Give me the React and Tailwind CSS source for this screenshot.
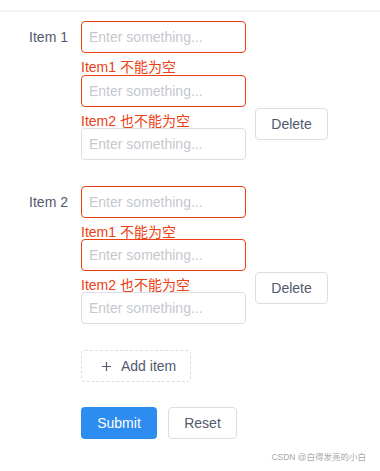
import React from "react";

const font = { fontFamily: '"Liberation Sans", Arial, "Noto Sans CJK SC", sans-serif' };

function Field({ error }) {
  return (
    <input
      readOnly
      placeholder="Enter something..."
      className={
        "block w-[165px] h-[32px] rounded-[4px] border bg-white px-[7px] text-[14px] text-[#515a6e] outline-none placeholder:text-[#c5c8ce] " +
        (error ? "border-[#ed4014]" : "border-[#dcdee2]")
      }
    />
  );
}

function Item({ label, first }) {
  return (
    <div className="flex items-start">
      <div className="w-[81px] pr-[13px] text-right text-[14px] leading-[32px] text-[#515a6e]">
        {label}
      </div>
      <div className="flex flex-col">
        <Field error />
        <div className={first ? "h-[22px]" : "h-[21px]"}>
          <div className="pt-[7px] text-[14px] leading-[14px] text-[#ed4014] whitespace-nowrap">
            Item1 不能为空
          </div>
        </div>
        <Field error />
        <div className="h-[21px]">
          <div className="pt-[7px] text-[14px] leading-[14px] text-[#ed4014] whitespace-nowrap">
            Item2 也不能为空
          </div>
        </div>
        <Field />
      </div>
      <button
        className={
          "ml-[9px] h-[32px] w-[73px] rounded-[4px] border border-[#dcdee2] bg-white text-[14px] text-[#515a6e] " +
          (first ? "mt-[87px]" : "mt-[86px]")
        }
      >
        Delete
      </button>
    </div>
  );
}

export default function App() {
  return (
    <div className="relative w-[380px] h-[471px] bg-white overflow-hidden" style={font}>
      <div className="h-[10px]" />
      <div className="h-[2px] bg-[#f3f3f3]" />
      <div className="h-[9px]" />
      <Item label="Item 1" first />
      <div className="h-[26px]" />
      <Item label="Item 2" />
      <div className="h-[26px]" />
      <div className="pl-[81px]">
        <button className="flex h-[32px] w-[110px] items-center justify-start pl-[20px] rounded-[4px] border border-dashed border-[#dcdee2] bg-white text-[14px] text-[#515a6e]">
          <svg width="9" height="9" viewBox="0 0 9 9" className="mt-[1px]">
            <path d="M4.5 0v9M0 4.5h9" stroke="#515a6e" strokeWidth="1.2" />
          </svg>
          <span className="ml-[10px]">Add item</span>
        </button>
        <div className="mt-[25px] flex">
          <button className="h-[32px] w-[76px] rounded-[4px] bg-[#2d8cf0] text-[14px] text-white">
            Submit
          </button>
          <button className="ml-[11px] h-[32px] w-[69px] rounded-[4px] border border-[#dcdee2] bg-white text-[14px] text-[#515a6e]">
            Reset
          </button>
        </div>
      </div>
      <div className="absolute right-[14px] bottom-[9px] text-[8.5px] leading-[10px] text-[#a8a8a8] whitespace-nowrap">
        CSDN @白得发亮的小白
      </div>
    </div>
  );
}
